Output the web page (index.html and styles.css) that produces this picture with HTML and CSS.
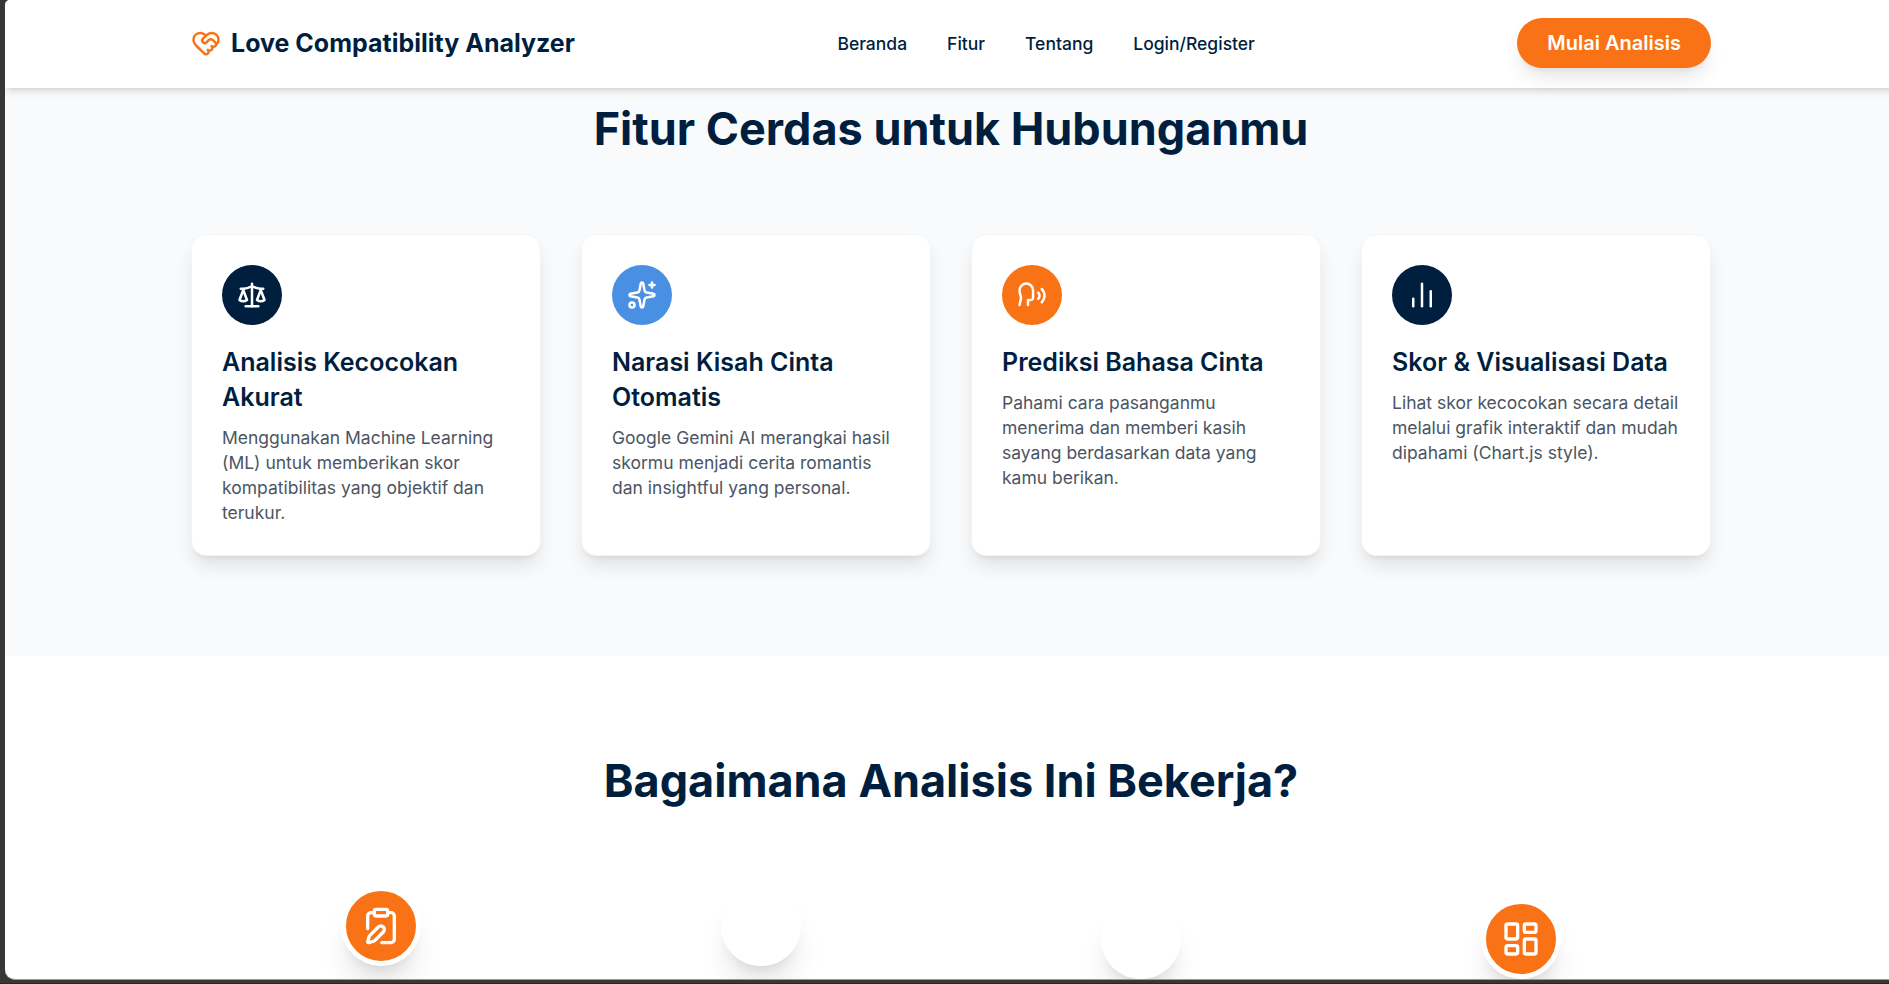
FILE: index.html
```html
<!DOCTYPE html>
<html lang="id">
<head>
<meta charset="utf-8">
<title>Love Compatibility Analyzer</title>
<link rel="stylesheet" href="styles.css">
</head>
<body>
<div class="window">
  <header class="header">
    <div class="container header-row">
      <a class="brand">
        <svg class="icon icon-md" viewBox="0 0 24 24"><path d="M19.414 14.414C21 12.828 22 11.5 22 9.5a5.5 5.5 0 0 0-9.591-3.676.6.6 0 0 1-.818.001A5.5 5.5 0 0 0 2 9.5c0 2.3 1.5 4 3 5.5l5.535 5.362a2 2 0 0 0 2.879.052 2.12 2.12 0 0 0-.004-3 2.124 2.124 0 1 0 3-3 2.124 2.124 0 0 0 3.004 0 2 2 0 0 0 0-2.828l-1.881-1.882a2.41 2.41 0 0 0-3.409 0l-1.71 1.71a2 2 0 0 1-2.828 0 2 2 0 0 1 0-2.828l2.823-2.762"/></svg>
        <span class="brand-name">Love Compatibility Analyzer</span>
      </a>
      <nav class="nav">
        <a>Beranda</a><a>Fitur</a><a>Tentang</a><a>Login/Register</a>
      </nav>
      <button class="cta">Mulai Analisis</button>
    </div>
  </header>

  <section class="features">
    <div class="container">
      <h2 class="heading">Fitur Cerdas untuk Hubunganmu</h2>
      <div class="cards">
        <article class="card">
          <div class="badge navy"><svg class="icon icon-md" viewBox="0 0 24 24"><path d="m16 16 3-8 3 8c-.87.65-1.92 1-3 1s-2.13-.35-3-1Z"/><path d="m2 16 3-8 3 8c-.87.65-1.92 1-3 1s-2.13-.35-3-1Z"/><path d="M7 21h10"/><path d="M12 3v18"/><path d="M3 7h2c2 0 5-1 7-2 2 1 5 2 7 2h2"/></svg></div>
          <h3>Analisis Kecocokan Akurat</h3>
          <p>Menggunakan Machine Learning (ML) untuk memberikan skor kompatibilitas yang objektif dan terukur.</p>
        </article>
        <article class="card">
          <div class="badge blue"><svg class="icon icon-md" viewBox="0 0 24 24"><path d="M11.017 2.814a1 1 0 0 1 1.966 0l1.051 5.558a2 2 0 0 0 1.594 1.594l5.558 1.051a1 1 0 0 1 0 1.966l-5.558 1.051a2 2 0 0 0-1.594 1.594l-1.051 5.558a1 1 0 0 1-1.966 0l-1.051-5.558a2 2 0 0 0-1.594-1.594l-5.558-1.051a1 1 0 0 1 0-1.966l5.558-1.051a2 2 0 0 0 1.594-1.594z"/><path d="M20 2v4"/><path d="M22 4h-4"/><circle cx="4" cy="20" r="2"/></svg></div>
          <h3>Narasi Kisah Cinta Otomatis</h3>
          <p>Google Gemini AI merangkai hasil skormu menjadi cerita romantis dan insightful yang personal.</p>
        </article>
        <article class="card">
          <div class="badge orange"><svg class="icon icon-md" viewBox="0 0 24 24"><path d="M8.8 20v-4.1l1.9.2a2.3 2.3 0 0 0 2.164-2.1V8.3A5.37 5.37 0 0 0 2 8.25c0 2.8.656 3.054 1 4.55a5.77 5.77 0 0 1 .029 2.758L2 20"/><path d="M19.8 17.8a7.5 7.5 0 0 0 .003-10.603"/><path d="M17 15a3.5 3.5 0 0 0-.025-4.975"/></svg></div>
          <h3>Prediksi Bahasa Cinta</h3>
          <p>Pahami cara pasanganmu menerima dan memberi kasih sayang berdasarkan data yang kamu berikan.</p>
        </article>
        <article class="card">
          <div class="badge navy"><svg class="icon icon-md" viewBox="0 0 24 24"><path d="M5 21v-6"/><path d="M12 21V3"/><path d="M19 21V9"/></svg></div>
          <h3>Skor &amp; Visualisasi Data</h3>
          <p>Lihat skor kecocokan secara detail melalui grafik interaktif dan mudah dipahami (Chart.js style).</p>
        </article>
      </div>
    </div>
  </section>

  <section class="how">
    <div class="container">
      <h2 class="heading">Bagaimana Analisis Ini Bekerja?</h2>
      <div class="steps">
        <div class="step"><div class="step-dot orange"><svg class="icon icon-lg" viewBox="0 0 24 24"><rect width="8" height="4" x="8" y="2" rx="1"/><path d="M16 4h2a2 2 0 0 1 2 2v14a2 2 0 0 1-2 2h-5.5"/><path d="M4 13.5V6a2 2 0 0 1 2-2h2"/><path d="M13.378 15.626a1 1 0 1 0-3.004-3.004l-5.01 5.012a2 2 0 0 0-.506.854l-.837 2.87a.5.5 0 0 0 .62.62l2.87-.837a2 2 0 0 0 .854-.506z"/></svg></div></div>
        <div class="step"><div class="step-dot"></div></div>
        <div class="step step-entering"><div class="step-dot"></div></div>
        <div class="step step-entering"><div class="step-dot orange"><svg class="icon icon-lg" viewBox="0 0 24 24"><rect width="7" height="9" x="3" y="3" rx="1"/><rect width="7" height="5" x="14" y="3" rx="1"/><rect width="7" height="9" x="14" y="12" rx="1"/><rect width="7" height="5" x="3" y="16" rx="1"/></svg></div></div>
      </div>
    </div>
  </section>
</div>
</body>
</html>
```
FILE: styles.css
```css
* { box-sizing: border-box; margin: 0; padding: 0; }
html { overflow: hidden; }
body {
  height: 984px;
  overflow: hidden;
  padding-left: 5px;
  background: #383737;
  border-bottom: 1px solid #252427;
  font-family: Inter, sans-serif;
  color: #001f3f;
}
.window {
  width: 1892px;
  height: 980px;
  overflow: hidden;
  display: flex;
  flex-direction: column;
  background: #fff;
  border-radius: 5px 0 0 10px;
  border-bottom: 1px solid #999;
}
.container { width: 1520px; margin: 0 auto; }

.header {
  position: relative;
  z-index: 1;
  flex: none;
  height: 88px;
  background: #fff;
  box-shadow: 0 5px 7.5px -1.25px rgba(0,0,0,.1), 0 2.5px 5px -2.5px rgba(0,0,0,.1);
}
.header-row { display: flex; justify-content: space-between; align-items: center; height: 86px; }
.brand { display: flex; align-items: center; gap: 10px; }
.brand .icon { color: #f97316; }
.brand-name { font-size: 25px; line-height: 35px; font-weight: 700; }
.nav { display: flex; gap: 40px; font-size: 17.5px; line-height: 25px; font-weight: 500; }
.cta {
  height: 50px;
  padding: 0 30px;
  border: 0;
  border-radius: 25px;
  background: #f97316;
  color: #fff;
  font: 600 20px/30px Inter, sans-serif;
  box-shadow: 0 12.5px 18.75px -3.75px rgba(0,0,0,.1), 0 5px 7.5px -5px rgba(0,0,0,.1);
}

.icon { display: block; fill: none; stroke: currentColor; stroke-width: 2; stroke-linecap: round; stroke-linejoin: round; }
.icon-md { width: 30px; height: 30px; }
.icon-lg { width: 40px; height: 40px; }

.heading { margin-bottom: 80px; text-align: center; font-size: 45px; line-height: 50px; font-weight: 700; }

.features { flex: none; height: 568px; padding-top: 16px; background: #f9fafc; }
.cards { display: grid; grid-template-columns: repeat(4, 1fr); gap: 40px; }
.card {
  height: 322px;
  padding: 30px;
  border: 1px solid #f3f4f6;
  border-radius: 15px;
  background: #fff;
  box-shadow: 0 12.5px 18.75px -3.75px rgba(0,0,0,.1), 0 5px 7.5px -5px rgba(0,0,0,.1);
}
.badge { display: flex; align-items: center; justify-content: center; width: 60px; height: 60px; margin-bottom: 20px; border-radius: 50%; color: #fff; }
.navy { background: #001f3f; }
.blue { background: #4a90e2; }
.orange { background: #f97316; }
.card h3 { margin-bottom: 10px; font-size: 25px; line-height: 35px; font-weight: 600; }
.card p { font-size: 17.5px; line-height: 25px; color: #4b5563; }

.how { flex: none; padding-top: 100px; }
.steps { display: grid; grid-template-columns: repeat(4, 1fr); }
.step { display: flex; justify-content: center; }
.step-entering { padding-top: 13px; }
.step-dot {
  display: flex; align-items: center; justify-content: center;
  width: 80px; height: 80px;
  border: 5px solid #fff;
  border-radius: 50%;
  color: #fff;
  box-shadow: 0 25px 31.25px -6.25px rgba(0,0,0,.1), 0 10px 12.5px -7.5px rgba(0,0,0,.1);
}
```
